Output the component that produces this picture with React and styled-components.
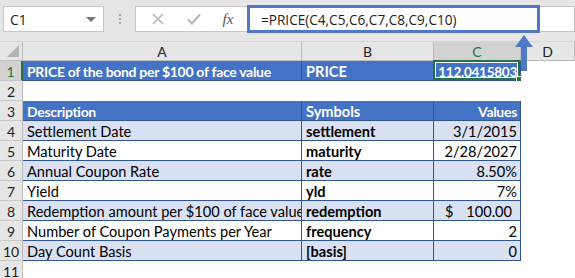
import React from "react";
import styled, { createGlobalStyle } from "styled-components";

const Global = createGlobalStyle`
  html, body { margin: 0; padding: 0; background: #ffffff; }
  body { width: 575px; height: 278px; overflow: hidden; font-family: Lato, "Open Sans", sans-serif; }
`;

const Page = styled.div`
  position: relative;
  width: 575px;
  height: 278px;
  overflow: hidden;
  background: #ffffff;
`;

const Toolbar = styled.div`
  height: 42px;
  background: #e6e6e6;
  display: flex;
  align-items: flex-start;
  padding-top: 6px;
  padding-left: 3px;
  box-sizing: border-box;
  border-bottom: 1px solid #d6d6d6;
`;

const NameBox = styled.div`
  width: 101px;
  height: 26px;
  box-sizing: border-box;
  background: #fff;
  border: 1px solid #c6c6c6;
  display: flex;
  align-items: center;
  justify-content: space-between;
  padding: 0 6px 0 6px;
  font-family: "Open Sans", "Noto Sans", sans-serif;
  font-size: 14px;
  color: #222;
`;

const Caret = styled.span`
  width: 0;
  height: 0;
  border-left: 5px solid transparent;
  border-right: 5px solid transparent;
  border-top: 5px solid #777;
  margin-right: 1px;
`;

const Dots = styled.div`
  width: 31px;
  height: 26px;
  display: flex;
  flex-direction: column;
  align-items: center;
  justify-content: center;
  gap: 2px;
  & > span { width: 2px; height: 2px; background: #a6a6a6; }
`;

const FxBox = styled.div`
  width: 113px;
  height: 26px;
  box-sizing: border-box;
  background: #fff;
  border: 1px solid #c6c6c6;
  border-right: none;
  display: flex;
  align-items: center;
  justify-content: space-around;
  padding: 0 4px;
`;

const FxText = styled.span`
  font-family: "Liberation Serif", serif;
  font-style: italic;
  font-size: 15px;
  color: #555;
`;

const Formula = styled.div`
  flex: 1;
  height: 26px;
  box-sizing: border-box;
  background: #fff;
  border: 1px solid #c6c6c6;
  display: flex;
  align-items: center;
  padding-left: 12px;
  font-family: "Open Sans", "Noto Sans", sans-serif;
  font-size: 13.6px;
  color: #222;
`;

const Highlight = styled.div`
  position: absolute;
  left: 247px;
  top: 5px;
  width: 293px;
  height: 28px;
  box-sizing: border-box;
  border: 3px solid #4f79c6;
  pointer-events: none;
`;

const Arrow = styled.svg`
  position: absolute;
  left: 514px;
  top: 34px;
  pointer-events: none;
`;

const Grid = styled.div`
  display: grid;
  grid-template-columns: 23px 279px 132px 87px 54px;
  grid-auto-rows: 20px;
  grid-template-rows: 19px;
  font-family: Lato, "Open Sans", sans-serif;
  font-size: 14.6px;
  color: #000;
`;

const Corner = styled.div`
  background: #e6e6e6;
  border-right: 1px solid #bdbdbd;
  border-bottom: 1px solid #bdbdbd;
  box-sizing: border-box;
  position: relative;
  &::after {
    content: "";
    position: absolute;
    right: 3px;
    bottom: 3px;
    width: 0;
    height: 0;
    border-left: 12px solid transparent;
    border-bottom: 12px solid #b4b4b4;
  }
`;

const ColHead = styled.div`
  background: ${(p) => (p.$active ? "#d2d2d2" : "#e6e6e6")};
  color: ${(p) => (p.$active ? "#217346" : "#222")};
  border-right: 1px solid #bdbdbd;
  border-bottom: 1px solid ${(p) => (p.$active ? "#217346" : "#bdbdbd")};
  box-sizing: border-box;
  display: flex;
  align-items: center;
  justify-content: center;
  font-size: 14px;
`;

const RowHead = styled.div`
  background: ${(p) => (p.$active ? "#d2d2d2" : "#e6e6e6")};
  color: ${(p) => (p.$active ? "#217346" : "#222")};
  border-right: ${(p) => (p.$active ? "2px solid #217346" : "1px solid #bdbdbd")};
  border-bottom: 1px solid #c8c8c8;
  box-sizing: border-box;
  display: flex;
  align-items: center;
  justify-content: center;
  padding-top: 1px;
  font-size: 14px;
`;

const fills = { head: "#4472c4", band: "#d9e1f2", plain: "#ffffff", none: "#ffffff" };
const sizes = { normal: ["14.6px", "0"], head: ["14px", "-0.3px"], value: ["13.6px", "-0.3px"] };

const Cell = styled.div`
  position: relative;
  box-sizing: border-box;
  background: ${(p) => fills[p.$fill || "none"]};
  color: ${(p) => (p.$fill === "head" ? "#ffffff" : "#000")};
  font-weight: ${(p) => (p.$bold ? 700 : 400)};
  font-size: ${(p) => sizes[p.$size || "normal"][0]};
  letter-spacing: ${(p) => sizes[p.$size || "normal"][1]};
  border-right: ${(p) => (p.$table ? "1px solid #2f5597" : "none")};
  border-bottom: ${(p) => (p.$table ? "1px solid #2f5597" : "none")};
  padding: 2px 3px 0 4px;
  line-height: 18px;
  white-space: nowrap;
  overflow: ${(p) => (p.$sel ? "visible" : "hidden")};
  display: flex;
  justify-content: ${(p) => (p.$split ? "space-between" : p.$right ? "flex-end" : "flex-start")};
`;

const Selected = styled.div`
  position: absolute;
  left: -1px;
  top: -1px;
  right: 0;
  bottom: 0;
  border: 2px solid #217346;
  box-shadow: inset 0 0 0 1px #ffffff;
  &::after {
    content: "";
    position: absolute;
    right: -5px;
    bottom: -5px;
    width: 5px;
    height: 5px;
    background: #217346;
    border: 1px solid #fff;
  }
`;

const Money = styled.span`
  padding-left: 7px;
  padding-right: 5px;
`;

const rows = [
  { n: 1, a: "PRICE of the bond per $100 of face value", b: "PRICE", c: "112.0415803", fill: "head", sel: true },
  { n: 2, empty: true },
  { n: 3, a: "Description", b: "Symbols", c: "Values", fill: "head" },
  { n: 4, a: "Settlement Date", b: "settlement", c: "3/1/2015", fill: "band" },
  { n: 5, a: "Maturity Date", b: "maturity", c: "2/28/2027", fill: "plain" },
  { n: 6, a: "Annual Coupon Rate", b: "rate", c: "8.50%", fill: "band" },
  { n: 7, a: "Yield", b: "yld", c: "7%", fill: "plain" },
  { n: 8, a: "Redemption amount per $100 of face value", b: "redemption", c: "100.00", money: true, fill: "band" },
  { n: 9, a: "Number of Coupon Payments per Year", b: "frequency", c: "2", fill: "plain" },
  { n: 10, a: "Day Count Basis", b: "[basis]", c: "0", fill: "band" },
  { n: 11, empty: true },
];

export default function App() {
  return (
    <Page>
      <Global />
      <Toolbar>
        <NameBox>
          <span>C1</span>
          <Caret />
        </NameBox>
        <Dots>
          <span />
          <span />
          <span />
        </Dots>
        <FxBox>
          <svg width="14" height="14" viewBox="0 0 14 14">
            <path d="M2 2 L12 12 M12 2 L2 12" stroke="#b5b5b5" strokeWidth="1.6" fill="none" />
          </svg>
          <svg width="16" height="14" viewBox="0 0 16 14">
            <path d="M2 7.5 L6 11.5 L14 2.5" stroke="#b5b5b5" strokeWidth="2" fill="none" />
          </svg>
          <FxText>fx</FxText>
        </FxBox>
        <Formula>=PRICE(C4,C5,C6,C7,C8,C9,C10)</Formula>
      </Toolbar>
      <Grid>
        <Corner />
        <ColHead>A</ColHead>
        <ColHead>B</ColHead>
        <ColHead $active>C</ColHead>
        <ColHead>D</ColHead>
        {rows.map((r) => {
          const head = r.fill === "head";
          return (
            <React.Fragment key={r.n}>
              <RowHead $active={r.sel}>{r.n}</RowHead>
              {r.empty ? (
                <>
                  <Cell />
                  <Cell />
                  <Cell />
                  <Cell />
                </>
              ) : (
                <>
                  <Cell $table $fill={r.fill} $bold={head} $size={head ? "head" : "normal"}>
                    {r.a}
                  </Cell>
                  <Cell $table $fill={r.fill} $bold>
                    {r.b}
                  </Cell>
                  <Cell
                    $table
                    $fill={r.fill}
                    $bold={head}
                    $size={r.sel ? "value" : head ? "head" : "normal"}
                    $right
                    $split={r.money}
                    $sel={r.sel}
                  >
                    {r.money ? (
                      <>
                        <Money>$</Money>
                        <Money>{r.c}</Money>
                      </>
                    ) : (
                      r.c
                    )}
                    {r.sel && <Selected />}
                  </Cell>
                  <Cell />
                </>
              )}
            </React.Fragment>
          );
        })}
      </Grid>
      <Highlight />
      <Arrow width="20" height="38" viewBox="0 0 20 38">
        <path d="M10 1 L19 13 L13 13 L13 37 L7 37 L7 13 L1 13 Z" fill="#4f79c6" />
      </Arrow>
    </Page>
  );
}
